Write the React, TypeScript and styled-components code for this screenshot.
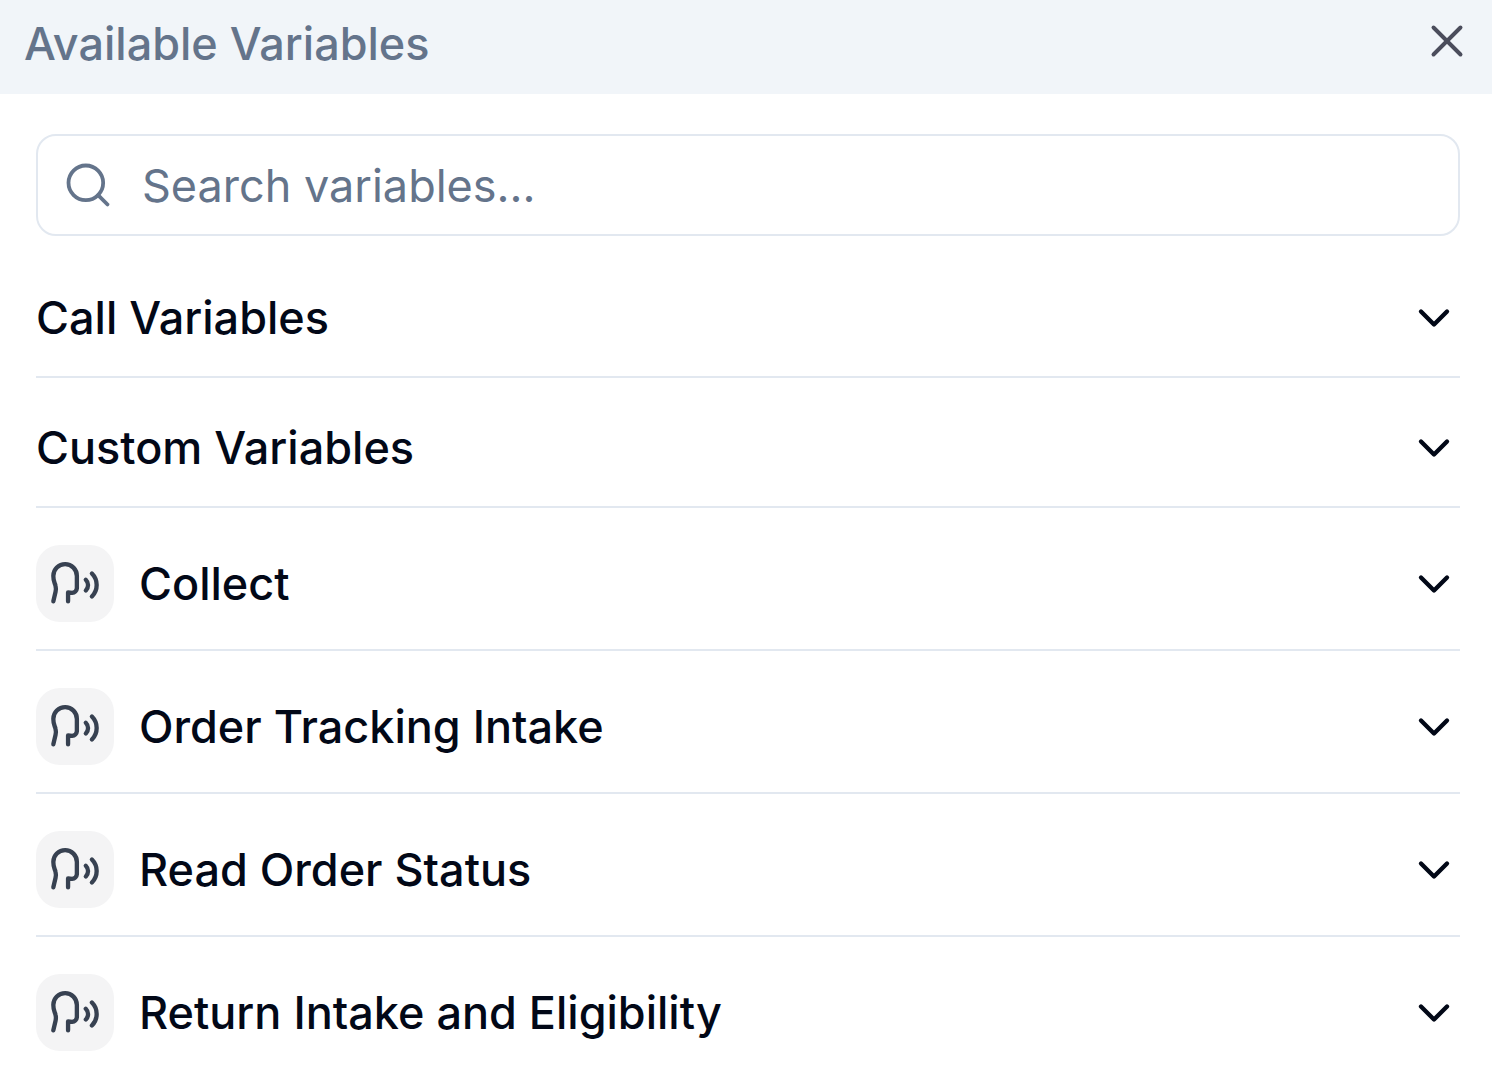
import React, { useState } from "react";
import styled, { createGlobalStyle } from "styled-components";
import { ChevronDown, Search, Speech, X } from "lucide-react";

const GlobalStyle = createGlobalStyle`
  *, *::before, *::after { box-sizing: border-box; }
  body {
    margin: 0;
    background: #ffffff;
    color: #020817;
    font-family: Inter, "Liberation Sans", sans-serif;
  }
`;

const Panel = styled.section`
  height: 100vh;
  overflow: hidden;
  background: #ffffff;
`;

const Header = styled.header`
  display: flex;
  align-items: flex-start;
  justify-content: space-between;
  padding: 14px 18px 20px 24px;
  background: #f1f5f9;
`;

const Title = styled.h2`
  margin: 0;
  color: #64748b;
  font-size: 45px;
  font-weight: 500;
  line-height: 60px;
`;

const CloseButton = styled.button`
  display: flex;
  padding: 0;
  border: 0;
  background: none;
  color: #4b4d5c;
  cursor: pointer;
`;

const Body = styled.div`
  padding: 40px 32px 0 36px;
`;

const SearchField = styled.label`
  display: flex;
  align-items: center;
  gap: 28px;
  height: 102px;
  padding: 0 24px;
  border: 2px solid #e2e8f0;
  border-radius: 20px;
  color: #64748b;
`;

const SearchInput = styled.input`
  flex: 1;
  min-width: 0;
  padding: 2px 0 0;
  border: 0;
  outline: 0;
  background: transparent;
  color: #020817;
  font-family: inherit;
  font-size: 45px;
  line-height: 64px;

  &::placeholder {
    color: #64748b;
    opacity: 1;
  }
`;

const Groups = styled.div`
  padding-top: 12px;
`;

const Group = styled.h3`
  margin: 0;
  border-bottom: 2px solid #e2e8f0;
`;

const GroupTrigger = styled.button<{ $withIcon: boolean }>`
  display: flex;
  align-items: center;
  gap: 25px;
  width: 100%;
  padding: ${({ $withIcon }) => ($withIcon ? "37px 0 27px" : "38px 0 26px")};
  border: 0;
  background: none;
  color: #020817;
  font-family: inherit;
  font-size: 45px;
  font-weight: 500;
  line-height: 64px;
  text-align: left;
  cursor: pointer;
`;

const GroupName = styled.span`
  flex: 1;
`;

const IconTile = styled.span`
  display: flex;
  align-items: center;
  justify-content: center;
  width: 78px;
  height: 77px;
  border-radius: 24px;
  background: #f4f4f5;
  color: #374151;
`;

const Chevron = styled(ChevronDown)<{ $open: boolean }>`
  transform: ${({ $open }) => ($open ? "rotate(180deg)" : "none")};
`;

const groups = [
  { name: "Call Variables", node: false },
  { name: "Custom Variables", node: false },
  { name: "Collect", node: true },
  { name: "Order Tracking Intake", node: true },
  { name: "Read Order Status", node: true },
  { name: "Return Intake and Eligibility", node: true },
];

export default function App() {
  const [query, setQuery] = useState("");
  const [open, setOpen] = useState<string | null>(null);
  const shown = groups.filter((g) => g.name.toLowerCase().includes(query.toLowerCase()));

  return (
    <>
      <GlobalStyle />
      <Panel>
        <Header>
          <Title>Available Variables</Title>
          <CloseButton type="button" aria-label="Close">
            <X size={54} strokeWidth={1.75} />
          </CloseButton>
        </Header>
        <Body>
          <SearchField>
            <Search size={52} strokeWidth={1.75} aria-hidden />
            <SearchInput
              type="text"
              aria-label="Search variables"
              placeholder="Search variables..."
              value={query}
              onChange={(e) => setQuery(e.target.value)}
            />
          </SearchField>
          <Groups>
            {shown.map((g) => (
              <Group key={g.name}>
                <GroupTrigger
                  type="button"
                  $withIcon={g.node}
                  aria-expanded={open === g.name}
                  onClick={() => setOpen(open === g.name ? null : g.name)}
                >
                  {g.node && (
                    <IconTile>
                      <Speech size={52} aria-hidden />
                    </IconTile>
                  )}
                  <GroupName>{g.name}</GroupName>
                  <Chevron $open={open === g.name} size={52} strokeWidth={2} aria-hidden />
                </GroupTrigger>
              </Group>
            ))}
          </Groups>
        </Body>
      </Panel>
    </>
  );
}
